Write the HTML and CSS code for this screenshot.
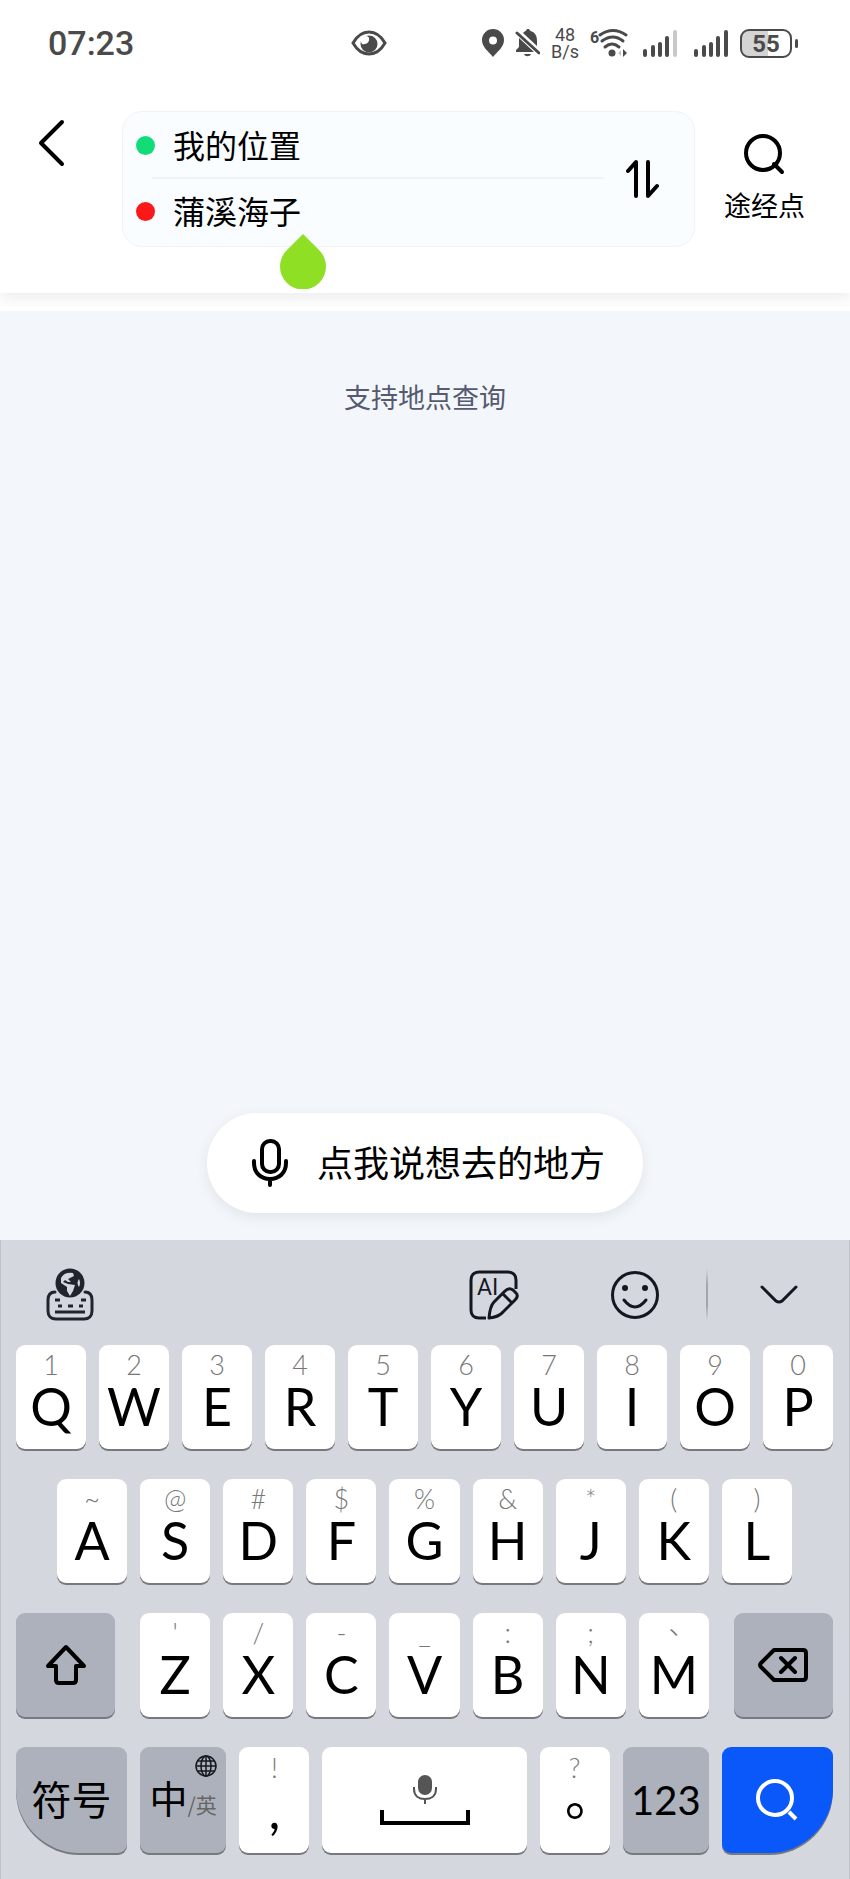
FILE: index.html
```html
<!DOCTYPE html>
<html lang="zh-CN">
<head>
    <meta charset="UTF-8">
    <meta name="viewport" content="width=device-width, initial-scale=1.0">
    <title>路线查询</title>
    <link rel="stylesheet" href="styles.css">
</head>
<body>
    <header class="header">
        <div class="status-bar">
            <span class="time">07:23</span>
            <svg class="eye" width="36" height="26" viewBox="0 0 36 26">
                <path d="M2 13C6 6 11 2 18 2s12 4 16 11c-4 7-9 11-16 11S6 20 2 13z" fill="none" stroke="#4a4a4a" stroke-width="3"/>
                <circle cx="18" cy="14" r="8.500" fill="#4a4a4a"/>
                <path d="M9 10c4-5 8-5 9-2 1 4-3 7-7 6z" fill="#fff"/>
            </svg>
            <div class="status-icons">
                <svg width="22" height="28" viewBox="0 0 22 28">
                    <path fill="#4a4a4a" fill-rule="evenodd" d="M11 0a11 11 0 0 1 11 11c0 7-6 11-11 17C6 22 0 18 0 11A11 11 0 0 1 11 0zm0 7.500a4 4 0 1 0 0 8 4 4 0 0 0 0-8z"/>
                </svg>
                <svg width="25" height="28" viewBox="0 0 25 28">
                    <path fill="#4a4a4a" d="M9 3c1-1 2-1 3-3h2c1 2 2 2 4 3 3 2 4 5 4 9v5L8 4zM4 9l15 14H1v-2l3-3zM9 25h7c-1 3-6 3-7 0z"/>
                    <path d="M2 4l22 20" stroke="#4a4a4a" stroke-width="3" stroke-linecap="round"/>
                </svg>
                <span class="net-speed">48<br>B/s</span>
                <svg width="42" height="32" viewBox="0 0 42 32">
                    <text x="0" y="16" font-family="Roboto, sans-serif" font-size="16" font-weight="700" fill="#4a4a4a">6</text>
                    <g fill="none" stroke="#4a4a4a" stroke-width="3" stroke-linecap="round">
                        <path d="M10 8q13-9 26 0"/>
                        <path d="M12 14q11-8 21 0"/>
                        <path d="M15 20q7-6 14 0"/>
                    </g>
                    <circle cx="22" cy="26" r="3.500" fill="#4a4a4a"/>
                    <path d="M31 23v6l-3-3z" fill="#c8c8c8"/>
                    <path d="M33 22v8l4-4z" fill="#4a4a4a"/>
                </svg>
                <svg width="40" height="28" viewBox="0 0 40 28">
                    <g stroke="#4a4a4a" stroke-width="4" stroke-linecap="round">
                        <path d="M2 22v4M10 18v8M17 15v11M24 9v17"/>
                        <path d="M32 3v23" stroke="#c8c8c8"/>
                    </g>
                </svg>
                <svg width="35" height="28" viewBox="0 0 35 28">
                    <path d="M2 22v4M10 18v8M17 15v11M24 9v17M32 3v23" stroke="#4a4a4a" stroke-width="4" stroke-linecap="round"/>
                </svg>
                <span class="battery">55</span>
            </div>
        </div>

        <div class="search-bar">
            <button type="button" class="back" aria-label="返回">
                <svg width="30" height="48" viewBox="0 0 30 48">
                    <path d="M26 3L5 24l21 21" fill="none" stroke="#000" stroke-width="4" stroke-linecap="round" stroke-linejoin="round"/>
                </svg>
            </button>
            <form class="route">
                <div class="route-fields">
                    <div class="route-row">
                        <span class="dot dot-start"></span>
                        <input type="text" aria-label="起点" value="我的位置">
                    </div>
                    <div class="divider"></div>
                    <div class="route-row">
                        <span class="dot dot-end"></span>
                        <input type="text" aria-label="终点" value="蒲溪海子">
                    </div>
                </div>
                <button type="button" class="swap" aria-label="交换">
                    <svg width="34" height="40" viewBox="0 0 34 40">
                        <path d="M2 13l8-9v34M22 4v34l9-10" fill="none" stroke="#000" stroke-width="4" stroke-linecap="round" stroke-linejoin="round"/>
                    </svg>
                </button>
                <svg class="handle" width="46" height="55" viewBox="0 0 46 55">
                    <path d="M23 0l16 16a23 23 0 1 1-32 0z" fill="#8fdf24"/>
                </svg>
            </form>
            <button type="button" class="via">
                <svg width="42" height="42" viewBox="0 0 42 42">
                    <circle cx="19" cy="20" r="17" fill="none" stroke="#000" stroke-width="4"/>
                    <path d="M30 31l8 8" stroke="#000" stroke-width="4" stroke-linecap="round"/>
                </svg>
                <span>途经点</span>
            </button>
        </div>
    </header>

    <main class="content">
        <p class="hint-text">支持地点查询</p>
        <button type="button" class="voice">
            <svg width="38" height="50" viewBox="0 0 38 50">
                <rect x="11" y="3" width="17" height="31" rx="8" fill="none" stroke="#000" stroke-width="4"/>
                <path d="M3 23v2c0 10 7 16 16 16s16-6 16-16v-2M19 42v5" fill="none" stroke="#000" stroke-width="4" stroke-linecap="round"/>
            </svg>
            <span>点我说想去的地方</span>
        </button>
    </main>

    <section class="keyboard" aria-label="键盘">
        <div class="toolbar">
            <button type="button" class="tool-lang" aria-label="语言">
                <svg width="48" height="54" viewBox="0 0 48 54">
                    <path d="M9 24c-5 0-7 3-7 8v11c0 5 3 8 8 8h28c5 0 8-3 8-8V32c0-5-2-8-7-8" fill="none" stroke="#20242c" stroke-width="3" stroke-linecap="round"/>
                    <path d="M9 32h5M35 32h5M12 38h4M22 38h5M33 38h4M9 44h30" stroke="#20242c" stroke-width="3"/>
                    <circle cx="24" cy="15" r="14.500" fill="#20242c"/>
                    <path d="M15 10q3-6 12-5l1 3-6 3 3 3h-3l-3-2-2 2 5 2 7 1-2 6-3 5-3-5v-4l-6-4z" fill="#d5d7df"/>
                    <path d="M33 11q-3 4 0 8 2-4 0-8z" fill="#d5d7df"/>
                </svg>
            </button>
            <button type="button" class="tool-ai" aria-label="AI 写作">
                <svg width="50" height="50" viewBox="0 0 50 50">
                    <path d="M17 48h-7c-5 0-8-3-8-8V10c0-5 3-8 8-8h29c5 0 8 3 8 8v9" fill="none" stroke="#14171f" stroke-width="3"/>
                    <text x="8" y="25" font-family="Roboto, sans-serif" font-size="23" fill="#14171f">AI</text>
                    <path d="M20 48q1-12 5-16l11-11q4-4 8-1l3 3q3 3-1 7L34 42q-4 5-14 6zM34 24l9 9" fill="none" stroke="#14171f" stroke-width="3" stroke-linejoin="round"/>
                </svg>
            </button>
            <button type="button" class="tool-emoji" aria-label="表情">
                <svg width="50" height="50" viewBox="0 0 50 50">
                    <circle cx="25" cy="25" r="22.500" fill="none" stroke="#14171f" stroke-width="3"/>
                    <circle cx="15" cy="18" r="3" fill="#14171f"/>
                    <circle cx="35" cy="18" r="3" fill="#14171f"/>
                    <path d="M14 30q11 14 22 0" fill="none" stroke="#14171f" stroke-width="3" stroke-linecap="round"/>
                </svg>
            </button>
            <span class="tool-line"></span>
            <button type="button" class="tool-hide" aria-label="收起">
                <svg width="38" height="20" viewBox="0 0 38 20">
                    <path d="M2 2l14 14q3 2 6 0L36 2" fill="none" stroke="#14171f" stroke-width="3" stroke-linecap="round"/>
                </svg>
            </button>
        </div>

        <div class="keys">
            <button type="button" class="key"><small>1</small>Q</button>
            <button type="button" class="key"><small>2</small>W</button>
            <button type="button" class="key"><small>3</small>E</button>
            <button type="button" class="key"><small>4</small>R</button>
            <button type="button" class="key"><small>5</small>T</button>
            <button type="button" class="key"><small>6</small>Y</button>
            <button type="button" class="key"><small>7</small>U</button>
            <button type="button" class="key"><small>8</small>I</button>
            <button type="button" class="key"><small>9</small>O</button>
            <button type="button" class="key"><small>0</small>P</button>
        </div>

        <div class="keys keys-middle">
            <button type="button" class="key"><small>~</small>A</button>
            <button type="button" class="key"><small>@</small>S</button>
            <button type="button" class="key"><small>#</small>D</button>
            <button type="button" class="key"><small>$</small>F</button>
            <button type="button" class="key"><small>%</small>G</button>
            <button type="button" class="key"><small>&amp;</small>H</button>
            <button type="button" class="key"><small>*</small>J</button>
            <button type="button" class="key"><small>(</small>K</button>
            <button type="button" class="key"><small>)</small>L</button>
        </div>

        <div class="keys">
            <button type="button" class="key key-gray key-shift" aria-label="大写">
                <svg width="42" height="42" viewBox="0 0 42 42">
                    <path d="M21 3L3 22h8v14q0 3 3 3h14q3 0 3-3V22h8z" fill="none" stroke="#000" stroke-width="4" stroke-linejoin="round"/>
                </svg>
            </button>
            <button type="button" class="key"><small>'</small>Z</button>
            <button type="button" class="key"><small>/</small>X</button>
            <button type="button" class="key"><small>-</small>C</button>
            <button type="button" class="key"><small>_</small>V</button>
            <button type="button" class="key"><small>:</small>B</button>
            <button type="button" class="key"><small>;</small>N</button>
            <button type="button" class="key"><small>、</small>M</button>
            <button type="button" class="key key-gray key-delete" aria-label="删除">
                <svg width="50" height="34" viewBox="0 0 50 34">
                    <path d="M16 2h29q3 0 3 3v24q0 3-3 3H16L3 19q-2-2 0-4zM23 10l14 14M37 10L23 24" fill="none" stroke="#000" stroke-width="4" stroke-linecap="round" stroke-linejoin="round"/>
                </svg>
            </button>
        </div>

        <div class="keys">
            <button type="button" class="key key-gray key-symbol">符号</button>
            <button type="button" class="key key-gray key-lang">
                <svg class="globe" width="22" height="22" viewBox="0 0 22 22">
                    <g fill="none" stroke="#14171f" stroke-width="1.500">
                        <circle cx="11" cy="11" r="10"/>
                        <ellipse cx="11" cy="11" rx="5" ry="10"/>
                        <path d="M11 1v20M1 11h20M3 6h16M3 16h16"/>
                    </g>
                </svg>
                <span>中<em>/英</em></span>
            </button>
            <button type="button" class="key"><small>!</small>,</button>
            <button type="button" class="key key-space" aria-label="空格">
                <svg width="90" height="56" viewBox="0 0 90 56">
                    <rect x="38" y="3" width="14" height="20" rx="7" fill="#555"/>
                    <path d="M34 15v2c0 7 5 10 11 10s11-3 11-10v-2M45 27v5" fill="none" stroke="#555" stroke-width="2"/>
                    <path d="M2 38v13h86V38" fill="none" stroke="#000" stroke-width="4"/>
                </svg>
            </button>
            <button type="button" class="key key-period"><small>?</small>。</button>
            <button type="button" class="key key-gray key-number">123</button>
            <button type="button" class="key key-search" aria-label="搜索">
                <svg width="42" height="42" viewBox="0 0 42 42">
                    <circle cx="19" cy="19" r="17" fill="none" stroke="#fff" stroke-width="4"/>
                    <path d="M33 33l7 7" stroke="#fff" stroke-width="4"/>
                </svg>
            </button>
        </div>
    </section>
</body>
</html>
```

FILE: styles.css
```css
* {
    box-sizing: border-box;
}
body {
    margin: 0;
    min-height: 100vh;
    display: flex;
    flex-direction: column;
    background: #fff;
    color: #000;
    font-family: "Noto Sans CJK SC", sans-serif;
}
button {
    margin: 0;
    padding: 0;
    border: 0;
    background: none;
    color: inherit;
    font: inherit;
    cursor: pointer;
}
svg {
    display: block;
    flex-shrink: 0;
}

/* header */
.header {
    position: relative;
    z-index: 1;
    padding-bottom: 46px;
    background: #fff;
    box-shadow: 0 6px 14px rgba(0, 0, 0, 0.07);
}
.status-bar {
    display: grid;
    grid-template-columns: 303px auto 1fr;
    align-items: center;
    height: 86px;
    padding: 0 52px 0 48px;
    color: #4a4a4a;
    font-family: Roboto, sans-serif;
}
.time {
    font-size: 34px;
    font-weight: 500;
}
.status-icons {
    display: flex;
    justify-content: flex-end;
    align-items: center;
    gap: 11px;
}
.net-speed {
    width: 28px;
    font-size: 18px;
    line-height: 17px;
    text-align: center;
}
.battery {
    position: relative;
    width: 52px;
    height: 29px;
    margin-right: 6px;
    border: 2px solid #4a4a4a;
    border-radius: 9px;
    background: linear-gradient(90deg, #d4d4d4 55%, #fff 55%);
    font-size: 24px;
    font-weight: 700;
    line-height: 26px;
    text-align: center;
}
.battery::after {
    content: "";
    position: absolute;
    top: 8px;
    right: -8px;
    width: 3px;
    height: 9px;
    border-radius: 2px;
    background: #4a4a4a;
}
.search-bar {
    display: flex;
    padding: 25px 45px 0 36px;
}
.back {
    width: 86px;
    height: 64px;
}
.route {
    position: relative;
    flex: 1;
    display: flex;
    padding: 1px 34px 3px 13px;
    border: 1px solid #f0f3f7;
    border-radius: 20px;
    background: #f9fdff;
}
.route-fields {
    flex: 1;
}
.route-row {
    display: flex;
    align-items: center;
    gap: 18px;
    height: 64px;
}
.route-row input {
    flex: 1;
    min-width: 0;
    padding: 0 0 2px;
    border: 0;
    outline: 0;
    background: none;
    color: #000;
    font: inherit;
    font-size: 32px;
    line-height: 48px;
}
.dot {
    width: 19px;
    height: 19px;
    border-radius: 50%;
}
.dot-start {
    background: #12dc78;
}
.dot-end {
    background: #fa1818;
}
.divider {
    height: 2px;
    margin-left: 16px;
    background: #f0f4f8;
}
.swap {
    margin-left: 22px;
}
.handle {
    position: absolute;
    top: 122px;
    left: 157px;
}
.via {
    display: flex;
    flex-direction: column;
    align-items: center;
    gap: 10px;
    margin-left: 29px;
    padding-top: 22px;
    font-size: 27px;
    line-height: 40px;
}

/* content */
.content {
    flex: 1;
    display: flex;
    flex-direction: column;
    justify-content: space-between;
    align-items: center;
    margin-top: 18px;
    padding: 66px 0 27px;
    background: #f3f7fb;
}
.hint-text {
    margin: 0;
    color: #555a70;
    font-size: 27px;
    line-height: 40px;
}
.voice {
    display: flex;
    align-items: center;
    gap: 28px;
    height: 100px;
    padding: 0 38px 0 44px;
    border-radius: 50px;
    background: #fff;
    box-shadow: 0 4px 14px rgba(0, 0, 0, 0.08);
    font-size: 36px;
}
.voice span {
    padding-bottom: 4px;
}

/* keyboard */
.keyboard {
    padding: 0 16px 26px 15px;
    border: 1px solid #c2c4cc;
    border-width: 0 1px;
    background: #d5d7df;
}
.toolbar {
    display: flex;
    align-items: center;
    height: 105px;
    padding: 4px 35px 0 30px;
}
.tool-ai {
    margin-left: auto;
}
.tool-emoji {
    margin: 0 46px 0 91px;
}
.tool-line {
    width: 2px;
    height: 52px;
    background: linear-gradient(#d5d7df, #a4a6ae 30%, #a4a6ae 70%, #d5d7df);
}
.tool-hide {
    margin-left: 52px;
}
.keys {
    display: flex;
    gap: 13px;
    margin-bottom: 30px;
}
.keys:last-child {
    margin-bottom: 0;
}
.keys-middle {
    padding: 0 41px;
}
.key {
    position: relative;
    flex: 70 1 0;
    min-width: 0;
    height: 104px;
    padding-bottom: 10px;
    border-radius: 9px;
    background: #fff;
    box-shadow: 0 2px 0 #77797f;
    font-family: Lato, "Noto Sans CJK TC", sans-serif;
    font-size: 52px;
    line-height: 54px;
    text-align: center;
}
.key small {
    display: block;
    height: 28px;
    color: #777;
    font-size: 27px;
    font-weight: 300;
    line-height: 28px;
}
.keys:last-child .key {
    height: 106px;
}
.key-gray,
.key-space,
.key-search {
    display: flex;
    justify-content: center;
    align-items: center;
    padding: 0;
}
.key-gray {
    background: #adb1bb;
}
.key-shift,
.key-delete {
    flex-grow: 99;
}
.key-shift {
    margin-right: 12px;
}
.key-delete {
    margin-left: 12px;
}
.key-symbol,
.key-search {
    flex-grow: 111;
}
.key-symbol {
    padding-bottom: 4px;
    border-bottom-left-radius: 64px;
    font-family: "Noto Sans CJK SC", sans-serif;
    font-size: 40px;
}
.key-lang,
.key-number {
    flex-grow: 86;
}
.key-lang {
    font-family: "Noto Sans CJK SC", sans-serif;
    font-size: 38px;
}
.key-lang em {
    color: #666;
    font-size: 21px;
    font-style: normal;
}
.globe {
    position: absolute;
    top: 8px;
    right: 9px;
}
.key-space {
    flex-grow: 204;
}
.key-period {
    font-family: "Noto Sans CJK TC", sans-serif;
}
.key-period small {
    font-family: Lato, sans-serif;
}
.key-number {
    font-size: 40px;
}
.key-search {
    border-bottom-right-radius: 64px;
    background: #0a58fa;
}
```
